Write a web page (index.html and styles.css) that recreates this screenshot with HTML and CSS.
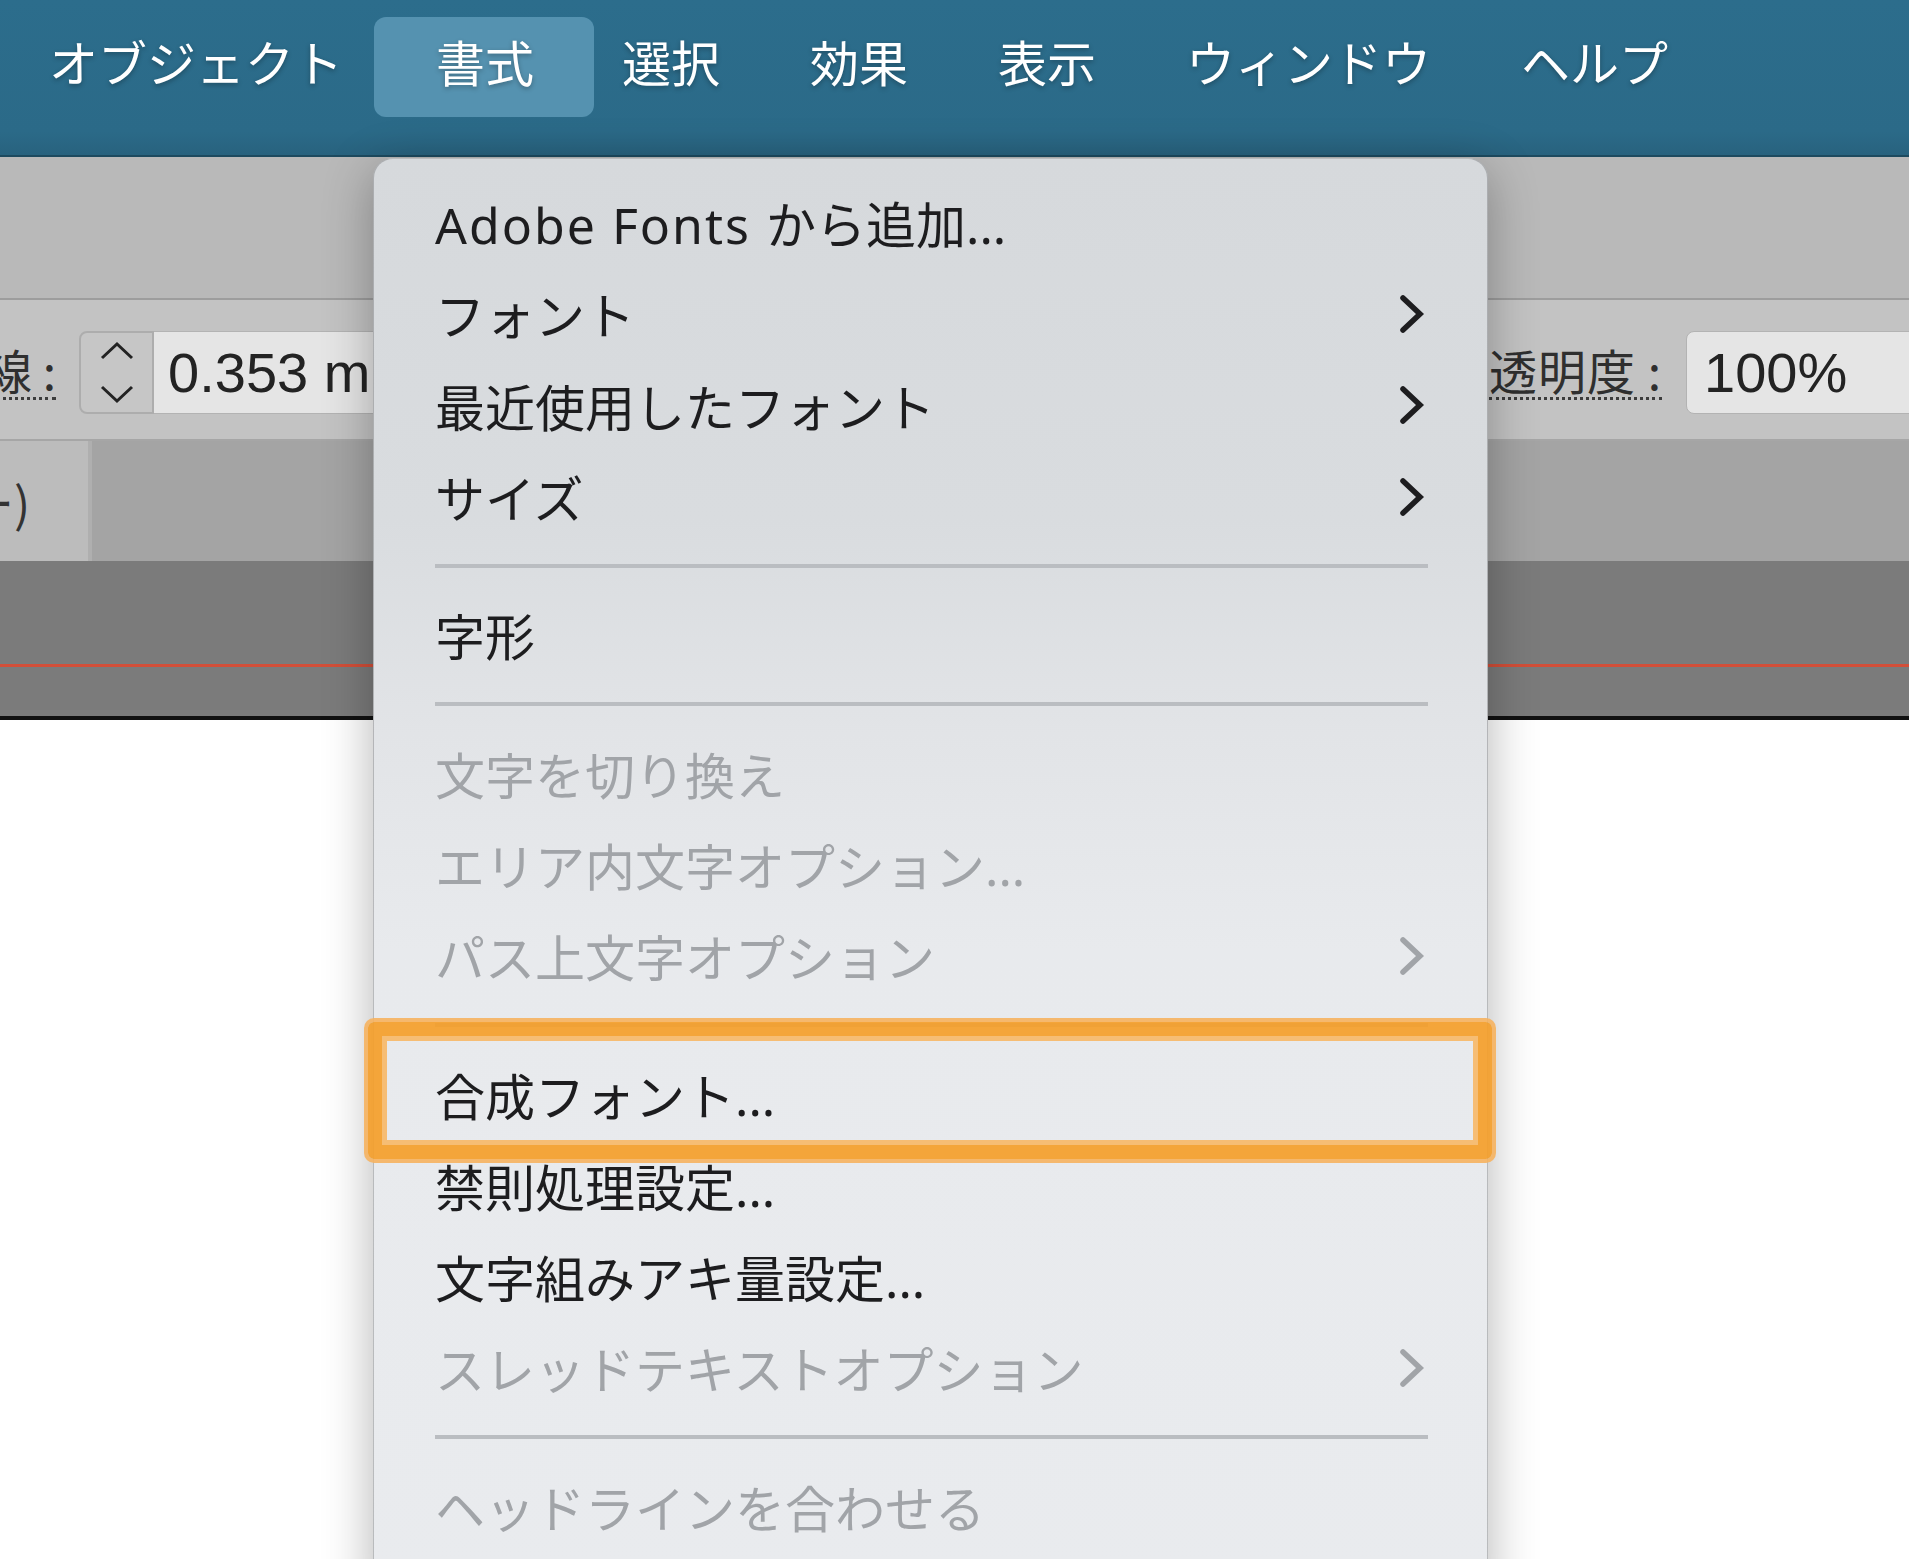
FILE: index.html
```html
<!DOCTYPE html>
<html lang="ja">
<head>
<meta charset="utf-8">
<title>書式メニュー</title>
<link rel="stylesheet" href="styles.css">
</head>
<body>
<div class="menubar">
  <div class="mb-item">オブジェクト</div>
  <div class="mb-item active">書式</div>
  <div class="mb-item">選択</div>
  <div class="mb-item">効果</div>
  <div class="mb-item">表示</div>
  <div class="mb-item">ウィンドウ</div>
  <div class="mb-item">ヘルプ</div>
</div>

<div class="toolbar">
  <div class="band1"></div>
  <div class="band2">
    <div class="group">
      <span class="label label-left">線 :</span>
      <div class="spinner">
        <svg class="spin-icon" viewBox="0 0 71 79" width="71" height="79"><polyline points="21,25 36,11 51,25"/><polyline points="21,54 36,68 51,54"/></svg>
      </div>
      <div class="field field-left">0.353 mm</div>
    </div>
    <div class="group">
      <span class="label label-right">透明度 :</span>
      <div class="field field-right">100%</div>
    </div>
  </div>
  <div class="band3">
    <div class="cell"><span class="cell-text">ー)</span></div>
  </div>
  <div class="band4"><div class="redline"></div></div>
  <div class="edge"></div>
</div>

<div class="menu">
  <div class="mi"><span><span class="latin">Adobe Fonts</span> から追加...</span></div>
  <div class="mi">フォント<svg class="chev" viewBox="0 0 26 40" width="26" height="40"><polyline points="4,4 21,20 4,36"/></svg></div>
  <div class="mi">最近使用したフォント<svg class="chev" viewBox="0 0 26 40" width="26" height="40"><polyline points="4,4 21,20 4,36"/></svg></div>
  <div class="mi">サイズ<svg class="chev" viewBox="0 0 26 40" width="26" height="40"><polyline points="4,4 21,20 4,36"/></svg></div>
  <div class="sep"></div>
  <div class="mi">字形</div>
  <div class="sep"></div>
  <div class="mi off">文字を切り換え</div>
  <div class="mi off">エリア内文字オプション...</div>
  <div class="mi off">パス上文字オプション<svg class="chev" viewBox="0 0 26 40" width="26" height="40"><polyline points="4,4 21,20 4,36"/></svg></div>
  <div class="sep"></div>
  <div class="mi">合成フォント...</div>
  <div class="mi">禁則処理設定...</div>
  <div class="mi">文字組みアキ量設定...</div>
  <div class="mi off">スレッドテキストオプション<svg class="chev" viewBox="0 0 26 40" width="26" height="40"><polyline points="4,4 21,20 4,36"/></svg></div>
  <div class="sep"></div>
  <div class="mi off">ヘッドラインを合わせる</div>
</div>

<div class="callout"></div>
</body>
</html>
```

FILE: styles.css
```css
html, body {
  margin: 0;
  padding: 0;
}
body {
  width: 1909px;
  height: 1559px;
  overflow: hidden;
  position: relative;
  background: #ffffff;
  font-family: "Noto Sans CJK JP", "Noto Sans", sans-serif;
}

/* ---------- top menu bar ---------- */
.menubar {
  height: 157px;
  box-sizing: border-box;
  background: linear-gradient(#2c6d8c, #2b6a88 85%, #28627e);
  border-bottom: 2px solid #1d4a5f;
  display: flex;
  align-items: flex-start;
  padding: 17px 0 0 4px;
}
.mb-item {
  height: 100px;
  line-height: 88px;
  padding: 0 45px;
  font-size: 49px;
  color: #ffffff;
  white-space: nowrap;
  text-shadow: 0 2px 5px rgba(0, 0, 0, 0.3);
}
.mb-item.active {
  background: #5592b0;
  border-radius: 12px;
  padding: 0 60px 0 62px;
  margin: 0 -17px 0 -14px;
}

/* ---------- grey toolbar ---------- */
.toolbar {
  overflow: hidden;
}
.band1 {
  height: 141px;
  background: #b9b9b9;
  border-bottom: 2px solid #9d9d9d;
}
.band2 {
  height: 141px;
  background: #c3c3c3;
  border-bottom: 2px solid #a6a6a6;
  display: flex;
  justify-content: space-between;
  align-items: flex-start;
  padding-top: 31px;
  box-sizing: border-box;
}
.group {
  display: flex;
  align-items: center;
  height: 83px;
}
.label {
  display: inline-block;
  font-size: 48px;
  line-height: 1;
  color: #2f2f2f;
  padding-bottom: 4px;
  border-bottom: 3px dotted #3c3c3c;
  white-space: nowrap;
}
.label-left {
  margin-left: -16px;
  margin-right: 23px;
}
.label-right {
  margin-right: 24px;
  letter-spacing: 1px;
}
.spinner {
  width: 75px;
  height: 83px;
  box-sizing: border-box;
  background: #c6c6c6;
  border: 2px solid #adadad;
  border-radius: 8px 0 0 8px;
}
.spin-icon {
  display: block;
  fill: none;
  stroke: #232323;
  stroke-width: 3;
}
.field {
  height: 83px;
  box-sizing: border-box;
  background: #e5e5e5;
  border: 1px solid #b3b3b3;
  font-family: "Liberation Sans", Arial, sans-serif;
  font-size: 56px;
  line-height: 81px;
  color: #232323;
  white-space: nowrap;
  overflow: hidden;
}
.field-left {
  width: 300px;
  border-left: none;
  padding-left: 14px;
}
.field-right {
  width: 260px;
  margin-right: -37px;
  border-radius: 8px;
  padding-left: 17px;
}
.band3 {
  height: 120px;
  background: #a4a4a4;
  display: flex;
}
.cell {
  width: 88px;
  background: #bcbcbc;
  border-right: 4px solid #afafaf;
  overflow: hidden;
  white-space: nowrap;
}
.cell-text {
  display: inline-block;
  margin-left: -34px;
  font-size: 48px;
  line-height: 120px;
  color: #333333;
}
.band4 {
  height: 155px;
  background: #7b7b7b;
  padding-top: 103px;
  box-sizing: border-box;
}
.redline {
  height: 3px;
  background: #d24f39;
}
.edge {
  height: 4px;
  background: #111111;
}

/* ---------- dropdown menu ---------- */
.menu {
  position: absolute;
  left: 373px;
  top: 158px;
  width: 1115px;
  height: 1440px;
  box-sizing: border-box;
  padding-top: 18px;
  border: 1px solid rgba(0, 0, 0, 0.2);
  border-bottom: none;
  border-radius: 20px 20px 0 0;
  background: linear-gradient(#d6d9dc 0%, #d9dcdf 25%, #e2e4e7 40%, #e8eaed 55%, #e9ebee 100%);
  box-shadow: 0 12px 50px rgba(0, 0, 0, 0.3);
  font-family: "Noto Sans", "Noto Sans CJK JP", sans-serif;
}
.mi {
  height: 91.3px;
  display: flex;
  align-items: center;
  justify-content: space-between;
  padding: 0 62px 0 61px;
  font-size: 50px;
  color: #1d1d1f;
  white-space: nowrap;
}
.latin {
  letter-spacing: 2px;
  margin-right: 2px;
}
.mi.off {
  color: #a1a4a8;
}
.chev {
  display: block;
  fill: none;
  stroke: currentColor;
  stroke-width: 5.5;
  stroke-linecap: round;
  stroke-linejoin: miter;
}
.sep {
  height: 4px;
  margin: 21.5px 59px 21.5px 61px;
  background: #babdc1;
}

/* ---------- orange annotation ---------- */
.callout {
  position: absolute;
  left: 368px;
  top: 1022px;
  width: 1124px;
  height: 137px;
  box-sizing: border-box;
  border: 14px solid rgba(244, 158, 42, 0.92);
  border-radius: 6px;
  box-shadow: 0 0 0 4px rgba(246, 178, 95, 0.9), inset 0 0 0 5px rgba(247, 186, 110, 0.95);
}
```
